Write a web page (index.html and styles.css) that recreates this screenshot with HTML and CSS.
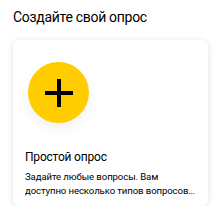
FILE: index.html
```
<!DOCTYPE html>
<html lang="ru">
<head>
<meta charset="utf-8">
<link rel="stylesheet" href="styles.css">
</head>
<body>
<main class="page">
  <h1 class="heading">Создайте свой опрос</h1>
  <div class="card">
    <div class="icon-wrap">
      <div class="icon">
        <svg width="28" height="28" viewBox="0 0 28 28"><rect x="12" y="0" width="4" height="28" fill="#000"/><rect x="0" y="12" width="28" height="4" fill="#000"/></svg>
      </div>
    </div>
    <div class="card-title">Простой опрос</div>
    <div class="card-desc">
      <span class="desc-line">Задайте любые вопросы. Вам</span>
      <span class="desc-line desc-last">доступно несколько типов вопросов и ответов</span>
    </div>
  </div>
</main>
</body>
</html>
```
FILE: styles.css
```
html, body { margin: 0; padding: 0; background: #fff; }
.page {
  padding: 7px 12px 0 13px;
  font-family: Roboto, "Liberation Sans", sans-serif;
  color: #000;
}
.heading {
  margin: 0;
  font-size: 14px;
  letter-spacing: -0.3px;
  font-weight: 400;
  line-height: 20px;
}
.card {
  margin-top: 13px;
  width: 195px;
  height: 166px;
  box-sizing: border-box;
  border-radius: 6px;
  background: #fff;
  box-shadow: 0 1px 6px rgba(0,0,0,0.12);
  padding: 22px 12px 0 12px;
  display: flex;
  flex-direction: column;
}
.icon-wrap { padding-left: 3px; }
.icon {
  width: 61px;
  height: 61px;
  border-radius: 50%;
  background: #ffcc00;
  box-shadow: 0 6px 12px rgba(0,0,0,0.06);
  display: flex;
  align-items: center;
  justify-content: center;
}
.card-title {
  margin-top: 26px;
  font-size: 12px;
  letter-spacing: -0.2px;
  line-height: 16px;
}
.card-desc {
  margin-top: 5px;
  font-size: 9.6px;
  letter-spacing: -0.1px;
  line-height: 14px;
  display: flex;
  flex-direction: column;
}
.desc-line {
  white-space: nowrap;
  overflow: hidden;
  text-overflow: ellipsis;
}
```
